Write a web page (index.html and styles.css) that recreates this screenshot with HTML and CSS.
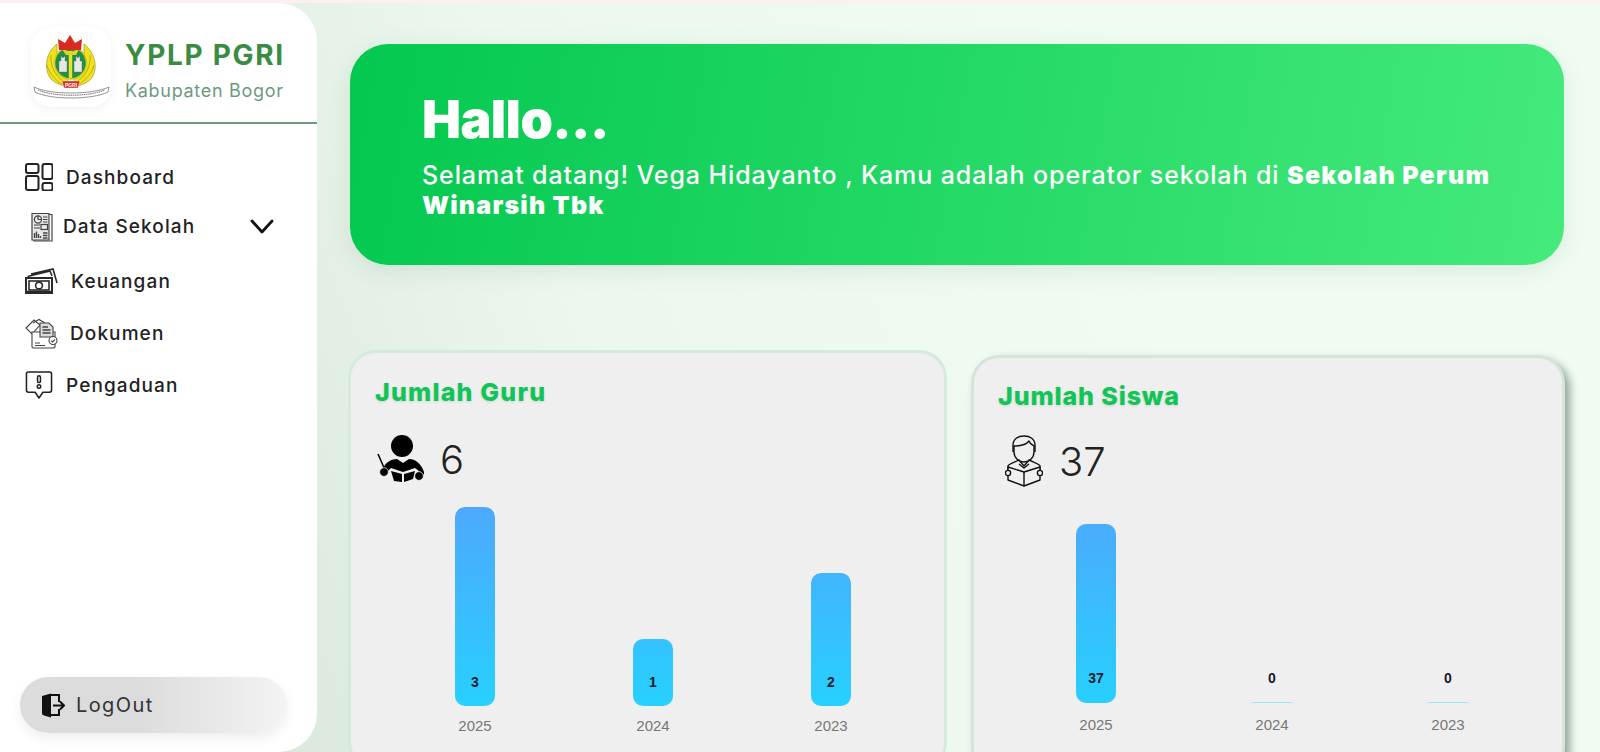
FILE: index.html
```html
<!DOCTYPE html>
<html lang="id">
<head>
  <meta charset="UTF-8">
  <meta name="viewport" content="width=device-width, initial-scale=1.0">
  <title>YPLP PGRI Dashboard</title>
  <link rel="stylesheet" href="styles.css">
</head>
<body>
  <div class="page">
    <aside class="sidebar">
      <div class="brand">
        <div class="logo">
          <svg viewBox="1 2 80 80" width="80" height="80">
            <path d="M27 19C16 27 13 44 21 54C26 59 33 61 38 61V50C31 48 27 41 27 34Z" fill="#f2e21c" stroke="#8e8c22" stroke-width=".6"/>
            <path d="M54 19C65 27 69 44 61 54C56 59 49 61 44 61V50C51 48 54 41 54 34Z" fill="#f2e21c" stroke="#8e8c22" stroke-width=".6"/>
            <path d="M21 30C20 41 25 50 33 56M17 40C19 48 25 55 32 59M60 30C61 41 56 50 48 56M64 40C62 48 56 55 49 59" fill="none" stroke="#8e8c22" stroke-width=".6"/>
            <circle cx="40.5" cy="38" r="16" fill="#1f9148" stroke="#d8c91e" stroke-width="1.6"/>
            <path d="M29 47V36H31V31L33 33L35 31V36H37V47Z M44 47V36H46V31L48 33L50 31V36H52V47Z" fill="#e4e9e4" stroke="#666" stroke-width=".4"/>
            <path d="M38.8 26H42.2V53H38.8Z" fill="#efe02c"/>
            <path d="M32 24L41 27L49 24L46 30H36Z" fill="#e3d420"/>
            <path d="M29 25L28 14L35 18L40 10L45 18L52 14L51 25Z" fill="#d92a1f"/>
            <path d="M32 56H50L48 63H34Z" fill="#d92a1f" stroke="#fff" stroke-width=".4"/>
            <text x="41" y="61.8" class="logo-mark">PGRI</text>
            <path d="M4 62C20 70 62 70 79 62L78 67C62 75 20 75 5 67Z" fill="#fff" stroke="#666" stroke-width=".7"/>
            <path d="M8 65C24 72 58 72 75 65" fill="none" stroke="#777" stroke-width="1" stroke-dasharray="1.6 .6"/>
          </svg>
        </div>
        <div class="brand-text">
          <div class="brand-name">YPLP PGRI</div>
          <div class="brand-sub">Kabupaten Bogor</div>
        </div>
      </div>

      <nav class="menu">
        <a class="menu-item">
          <svg class="icon-dash" viewBox="0 0 28 28" fill="none" stroke="#222" stroke-width="2">
            <rect x="1" y="1" width="12.5" height="9" rx="2"/>
            <rect x="1" y="13" width="12.5" height="14" rx="2"/>
            <rect x="17.5" y="1" width="10" height="15" rx="2"/>
            <rect x="17.5" y="20" width="10" height="7.5" rx="2"/>
          </svg>
          <span>Dashboard</span>
        </a>
        <a class="menu-item menu-data">
          <svg class="icon-data" viewBox="0 0 24 32" fill="none" stroke="#444" stroke-width="1.2">
            <path d="M3 3.5H20V30H3Z" fill="#e8e8e8"/>
            <path d="M20 4.5H23V31H5V30"/>
            <circle cx="9" cy="9.5" r="3.6"/>
            <path d="M9 9.5V6M9 9.5H12.5"/>
            <path d="M14 7H18.5M14 9.5H18.5M14 12H18.5M5 15H11M5 18H11"/>
            <rect x="12" y="14.5" width="6.5" height="5"/>
            <path d="M5.5 28V23M7.5 28V21.5M9.5 28V24M11.5 28V26M14 23H18.5M14 25.5H18.5M14 28H18.5" stroke-width="1.4"/>
          </svg>
          <span>Data Sekolah</span>
          <svg class="chevron" viewBox="0 0 24 15" fill="none" stroke="#111" stroke-width="2.8" stroke-linecap="round" stroke-linejoin="round">
            <path d="M2 2L12 13L22 2"/>
          </svg>
        </a>
        <a class="menu-item menu-money">
          <svg class="icon-money" viewBox="0 0 33 26" fill="none" stroke="#2a2a2a" stroke-width="1.6">
            <path d="M2.5 8.5L25 3L27 8M6 6L28 1L32 15"/>
            <rect x="1" y="10" width="26" height="15" fill="#fff" stroke-width="2"/>
            <rect x="4" y="13" width="20" height="9"/>
            <circle cx="14" cy="17.5" r="3.4"/>
            <path d="M1 24L27 24" stroke-width="2.4"/>
          </svg>
          <span>Keuangan</span>
        </a>
        <a class="menu-item menu-doc">
          <svg class="icon-doc" viewBox="0 0 33 31" fill="none" stroke="#444" stroke-width="1.1">
            <path d="M1 10L9 2L15 7L7 16Z" fill="#fff"/>
            <path d="M8 5L14 1.5L20 5"/>
            <path d="M7 14H30V29C30 30 29 30 28 30H9C8 30 7 30 7 29Z" fill="#fff"/>
            <path d="M15 5H24L28 9V19H15Z" fill="#ddd"/>
            <path d="M17.5 9H23M17.5 12H25.5M17.5 15H25.5" stroke-width="1.3"/>
            <path d="M10 25H15M10 27.5H20"/>
            <circle cx="28" cy="22.5" r="4" fill="#fff"/>
            <path d="M26 22.8L27.5 24L30 21.5"/>
          </svg>
          <span>Dokumen</span>
        </a>
        <a class="menu-item">
          <svg class="icon-report" viewBox="0 0 28 29" fill="none" stroke="#222" stroke-width="1.6" stroke-linejoin="round">
            <path d="M3 1H25C26 1 27 2 27 3V20C27 21 26 22 25 22H18L14 28L10 22H3C2 22 1 21 1 20V3C1 2 2 1 3 1Z"/>
            <rect x="12.5" y="5" width="3" height="7" rx="1.5"/>
            <circle cx="14" cy="16" r="1.8"/>
          </svg>
          <span>Pengaduan</span>
        </a>
      </nav>

      <button class="logout">
        <svg viewBox="0 0 24 25" width="24" height="25">
          <path d="M1 3L10 0.5V24.5L3 22.5C2 22 1 21.5 1 20.5Z" fill="#111"/>
          <path d="M8 2H18V9M18 16V22H10" fill="none" stroke="#111" stroke-width="2"/>
          <path d="M12 12.5H23M19 8.5L23 12.5L19 16.5" fill="none" stroke="#111" stroke-width="2"/>
        </svg>
        <span>LogOut</span>
      </button>
    </aside>

    <main class="content">
      <section class="hero">
        <h1>Hallo...</h1>
        <p>Selamat datang! Vega Hidayanto , Kamu adalah operator sekolah di <b>Sekolah Perum Winarsih Tbk</b></p>
      </section>

      <section class="cards">
        <div class="card">
          <h2>Jumlah Guru</h2>
          <div class="stat">
            <svg class="icon-guru" viewBox="0 0 48 48" width="48" height="48">
              <circle cx="25" cy="11" r="11" fill="#000"/>
              <path d="M6 34C8 27 15 24 20 24L26 28L32 24C38 24 44 28 47 37L47 40L38 33L26 37L14 33L10 37Z" fill="#000"/>
              <path d="M14 36L25 39V47L17 46Z M38 36L27 39V47L36 44Z" fill="#000"/>
              <path d="M26 37V48" stroke="#efefef" stroke-width="1"/>
              <path d="M1 19L8 35" stroke="#000" stroke-width="1.5"/>
              <circle cx="7" cy="37" r="4.3" fill="#000" stroke="#efefef" stroke-width=".7"/>
              <circle cx="42" cy="41" r="4.3" fill="#000" stroke="#efefef" stroke-width=".7"/>
            </svg>
            <span>6</span>
          </div>
          <div class="chart">
            <div class="col">
              <div class="slot">
                <div class="bar" style="height: 199px"></div>
                <b>3</b>
              </div>
              <small>2025</small>
            </div>
            <div class="col">
              <div class="slot">
                <div class="bar" style="height: 67px"></div>
                <b>1</b>
              </div>
              <small>2024</small>
            </div>
            <div class="col">
              <div class="slot">
                <div class="bar" style="height: 133px"></div>
                <b>2</b>
              </div>
              <small>2023</small>
            </div>
          </div>
        </div>

        <div class="card card-raised">
          <h2>Jumlah Siswa</h2>
          <div class="stat">
            <svg class="icon-siswa" viewBox="0 0 38 52" width="38" height="52" fill="none" stroke="#111" stroke-width="1.4" stroke-linejoin="round">
              <path d="M8 17V10C8 4 13 1 19 1C25 1 30 4 30 10V17"/>
              <path d="M9 11C15 11 21 10 24 6C25 9 28 10 29 11V17C29 23 24 27 19 27C14 27 9 23 9 17Z"/>
              <path d="M3 38V31C3 29 10 27 14 25L19 31L24 25C28 27 35 29 35 31V38"/>
              <path d="M3 32L19 37L35 32V45L19 51L3 45Z" fill="#f0f0f0"/>
              <path d="M19 37V51M14 29L19 33L24 29"/>
              <circle cx="3" cy="38" r="2.6" fill="#f0f0f0"/>
              <circle cx="35" cy="38" r="2.6" fill="#f0f0f0"/>
            </svg>
            <span>37</span>
          </div>
          <div class="chart">
            <div class="col">
              <div class="slot">
                <div class="bar" style="height: 179px"></div>
                <b>37</b>
              </div>
              <small>2025</small>
            </div>
            <div class="col">
              <div class="slot">
                <div class="bar bar-empty"></div>
                <b>0</b>
              </div>
              <small>2024</small>
            </div>
            <div class="col">
              <div class="slot">
                <div class="bar bar-empty"></div>
                <b>0</b>
              </div>
              <small>2023</small>
            </div>
          </div>
        </div>
      </section>
    </main>
  </div>
</body>
</html>
```

FILE: styles.css
```css
* {
  box-sizing: border-box;
}
html, body {
  margin: 0;
  height: 100%;
  overflow: hidden;
}
body {
  font-family: Inter, "Noto Sans", sans-serif;
  color: #222;
  background: #fdeff2;
}
.page {
  display: flex;
  height: 100%;
  margin-top: 3px;
  background: linear-gradient(70deg, #dbe8dd 15%, #ecf8ee 40%, #f0fcf2 75%);
}

/* sidebar */
.sidebar {
  flex: 0 0 317px;
  height: 749px;
  display: flex;
  flex-direction: column;
  background: #fff;
  border-radius: 0 38px 38px 0;
}
.brand {
  display: flex;
  align-items: center;
  gap: 14px;
  padding: 24px 0 15px 31px;
  border-bottom: 2px solid #6f9a7f;
}
.logo {
  width: 80px;
  height: 80px;
  border-radius: 20px;
  background: #fff;
  box-shadow: 0 2px 10px rgba(0, 0, 0, 0.06);
}
.logo-mark {
  font: bold 5px "Liberation Sans", sans-serif;
  fill: #fff;
  text-anchor: middle;
}
.brand-text {
  padding-top: 5px;
}
.brand-name {
  font-size: 28px;
  font-weight: 700;
  letter-spacing: 1.7px;
  color: #3a8c42;
}
.brand-sub {
  margin-top: 8px;
  font-size: 18px;
  letter-spacing: 0.7px;
  color: #6c9a80;
}
.menu {
  display: flex;
  flex-direction: column;
  padding: 27px 0 0 25px;
}
.menu-item {
  display: flex;
  align-items: center;
  gap: 13px;
  height: 52px;
  font-size: 19px;
  font-weight: 500;
  letter-spacing: 1.1px;
  color: #222;
}
.icon-dash, .icon-report {
  width: 28px;
  height: 28px;
}
.menu-data {
  height: 50px;
  margin-top: -2px;
  margin-bottom: 4px;
  padding-left: 4px;
  gap: 10px;
}
.icon-data {
  width: 24px;
  height: 32px;
}
.chevron {
  width: 24px;
  height: 15px;
  margin-left: auto;
  margin-right: 43px;
}
.icon-money {
  width: 33px;
  height: 26px;
}
.icon-doc {
  width: 33px;
  height: 31px;
}
.menu-doc {
  gap: 12px;
}
.logout {
  display: flex;
  align-items: center;
  gap: 11px;
  width: 267px;
  height: 56px;
  margin: auto 0 19px 20px;
  padding: 0 0 0 21px;
  border: none;
  border-radius: 28px;
  font-family: inherit;
  font-size: 20px;
  letter-spacing: 1.4px;
  color: #333;
  background: linear-gradient(90deg, #dcdcdc 45%, #f4f4f4);
  box-shadow: 0 5px 12px rgba(0, 0, 0, 0.07);
}

/* content */
.content {
  flex: 1;
  min-width: 0;
  padding: 41px 36px 0 31px;
}
.hero {
  height: 221px;
  margin-left: 2px;
  padding: 44px 60px 0 72px;
  border-radius: 38px;
  color: #fff;
  background: linear-gradient(100deg, #03c850, #45ea7c);
  box-shadow: 0 6px 24px rgba(30, 90, 50, 0.1);
}
.hero h1 {
  margin: 0;
  font-size: 52px;
  line-height: 64px;
  font-weight: 900;
  letter-spacing: -0.6px;
}
.hero p {
  margin: 8px 0 0;
  font-size: 25px;
  line-height: 30px;
  font-weight: 500;
  letter-spacing: 0.9px;
}
.hero b {
  font-weight: 900;
  letter-spacing: 1.2px;
}
.cards {
  display: grid;
  grid-template-columns: 599px 594px;
  gap: 24px;
  margin-top: 85px;
}
.card {
  height: 420px;
  padding: 24px 24px 0;
  border: 3px solid #d4eadd;
  border-radius: 28px;
  background: #efefef;
}
.card-raised {
  margin-top: 5px;
  padding-top: 23px;
  border-color: #d3e6dc;
  box-shadow: 5px 5px 9px rgba(40, 60, 50, 0.45);
}
.card h2 {
  margin: 0;
  font-size: 25px;
  line-height: 30px;
  font-weight: 800;
  letter-spacing: 1.2px;
  color: #0fc556;
  text-shadow: 0 1px 3px rgba(0, 0, 0, 0.12);
}
.card-raised h2 {
  letter-spacing: 0.9px;
}
.stat {
  display: flex;
  align-items: center;
  gap: 15px;
  margin-top: 26px;
  height: 52px;
  padding-left: 2px;
  font-size: 40px;
  font-weight: 300;
  color: #222;
}
.card-raised .stat {
  padding-left: 7px;
  gap: 16px;
  margin-top: 24px;
}
.chart {
  display: flex;
  margin-top: 22px;
  padding: 0 0 0 11px;
}
.card-raised .chart {
  margin-top: 37px;
  padding: 0 2px 0 10px;
}
.col {
  flex: 1;
  display: flex;
  flex-direction: column;
  align-items: center;
  font-family: "Liberation Sans", Arial, sans-serif;
}
.slot {
  position: relative;
  display: flex;
  align-items: flex-end;
  justify-content: center;
  width: 40px;
  height: 199px;
}
.card-raised .slot {
  height: 179px;
}
.bar {
  width: 100%;
  border-radius: 10px;
  background: linear-gradient(180deg, #4ea8fd, #27d0ff) bottom / 100% 199px no-repeat;
}
.bar-empty {
  height: 1px;
  border-radius: 0;
  background: #9fe3f7;
}
.slot b {
  position: absolute;
  left: 0;
  right: 0;
  bottom: 16px;
  font-size: 14px;
  line-height: 15px;
  text-align: center;
  color: #16202a;
}
.card-raised .slot b {
  bottom: 17px;
}
.col small {
  margin-top: 12px;
  font-size: 15px;
  line-height: 16px;
  color: #777;
}
.card-raised .col small {
  margin-top: 14px;
}
```
